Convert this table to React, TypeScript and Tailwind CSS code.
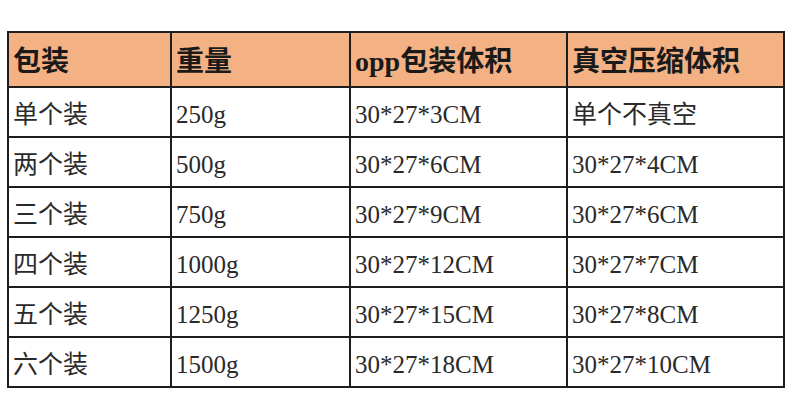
const head = ['包装', '重量', 'opp包装体积', '真空压缩体积'];

const rows = [
  ['单个装', '250g', '30*27*3CM', '单个不真空'],
  ['两个装', '500g', '30*27*6CM', '30*27*4CM'],
  ['三个装', '750g', '30*27*9CM', '30*27*6CM'],
  ['四个装', '1000g', '30*27*12CM', '30*27*7CM'],
  ['五个装', '1250g', '30*27*15CM', '30*27*8CM'],
  ['六个装', '1500g', '30*27*18CM', '30*27*10CM'],
];

export default function App() {
  return (
    <div className="w-[790px] h-[403px] bg-white pt-[31px] pl-[7px] font-['Liberation_Serif','Noto_Sans_CJK_SC',serif] text-[#222]">
      <table className="border-collapse border-2 border-[#1e1e1e] table-fixed w-[776px]">
        <colgroup>
          <col className="w-[163px]" />
          <col className="w-[179px]" />
          <col className="w-[217px]" />
          <col className="w-[217px]" />
        </colgroup>
        <thead>
          <tr className="h-[55px] bg-[#f4b183]">
            {head.map(h => (
              <th key={h} className="border-2 border-[#1e1e1e] text-left align-middle pl-[4px] pt-[5px] text-[28px] font-bold text-[#1a1a1a] leading-none">
                {h}
              </th>
            ))}
          </tr>
        </thead>
        <tbody>
          {rows.map(r => (
            <tr key={r[0]} className="h-[50px]">
              {r.map((c, i) => (
                <td key={i} className="border-2 border-[#1e1e1e] pl-[4px] pt-[5px] text-[25px] leading-none align-middle text-[#2a2a2a]">
                  {c}
                </td>
              ))}
            </tr>
          ))}
        </tbody>
      </table>
    </div>
  );
}
